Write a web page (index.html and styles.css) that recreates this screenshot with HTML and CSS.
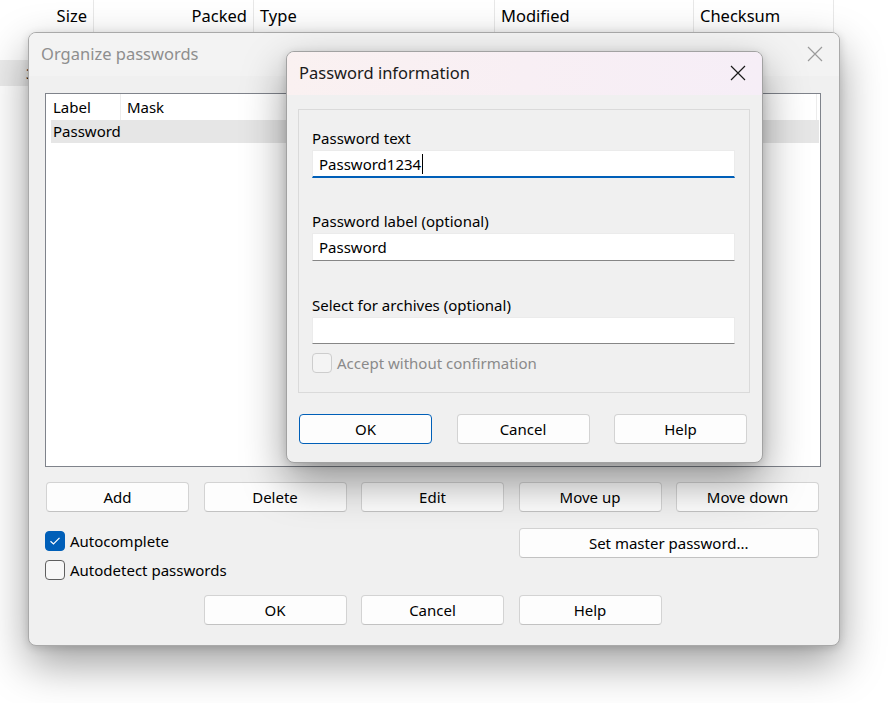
FILE: index.html
```html
<!DOCTYPE html>
<html>
<head>
<meta charset="utf-8">
<link rel="stylesheet" href="styles.css">
</head>
<body>
<div class="filelist">
  <div class="fl-header">
    <div class="fl-col c-size">Size</div>
    <div class="fl-col c-packed">Packed</div>
    <div class="fl-col c-type">Type</div>
    <div class="fl-col c-mod">Modified</div>
    <div class="fl-col c-sum">Checksum</div>
  </div>
  <div class="fl-row"></div>
  <div class="fl-row sel"><span class="fl-cell">3</span></div>
</div>

<div class="dialog outer">
  <div class="titlebar">
    <span class="title">Organize passwords</span>
    <svg class="close" width="16" height="16" viewBox="0 0 16 16"><path d="M1 1L15 15M15 1L1 15" stroke="currentColor" stroke-width="1.2" fill="none"/></svg>
  </div>
  <div class="obody">
    <div class="listbox">
      <div class="lb-header">
        <div class="lb-col lb-label">Label</div>
        <div class="lb-col lb-mask">Mask</div>
        <div class="lb-col lb-rest"></div>
      </div>
      <div class="lb-row sel">Password</div>
    </div>
    <div class="actions">
      <button class="btn">Add</button>
      <button class="btn">Delete</button>
      <button class="btn">Edit</button>
      <button class="btn">Move up</button>
      <button class="btn">Move down</button>

      <div class="checks">
        <label class="chk"><span class="box checked"><svg width="12" height="10" viewBox="0 0 12 10"><path d="M1.5 5.2L4.5 8L10.5 1.8" stroke="#fff" stroke-width="1.2" fill="none"/></svg></span>Autocomplete</label>
        <label class="chk"><span class="box"></span>Autodetect passwords</label>
      </div>
      <button class="btn master">Set master password...</button>

      <button class="btn b-ok">OK</button>
      <button class="btn b-cancel">Cancel</button>
      <button class="btn b-help">Help</button>
    </div>
  </div>
</div>

<div class="dialog inner">
  <div class="titlebar pink">
    <span class="title dark">Password information</span>
    <svg class="close dark" width="16" height="16" viewBox="0 0 16 16"><path d="M1 1L15 15M15 1L1 15" stroke="currentColor" stroke-width="1.2" fill="none"/></svg>
  </div>
  <div class="ibody">
    <div class="group">
      <div class="field">
        <div class="flabel">Password text</div>
        <div class="input focus">Password1234<span class="caret"></span></div>
      </div>
      <div class="field">
        <div class="flabel">Password label (optional)</div>
        <div class="input">Password</div>
      </div>
      <div class="field">
        <div class="flabel">Select for archives (optional)</div>
        <div class="input"></div>
      </div>
      <label class="chk disabled"><span class="box"></span>Accept without confirmation</label>
    </div>
    <div class="ibuttons">
      <button class="btn default">OK</button>
      <button class="btn">Cancel</button>
      <button class="btn">Help</button>
    </div>
  </div>
</div>
</body>
</html>
```

FILE: styles.css
```css
html, body {
  margin: 0;
  padding: 0;
  background: #ffffff;
  width: 892px;
  height: 703px;
  overflow: hidden;
  font-family: "Noto Sans", "Open Sans", sans-serif;
  font-size: 15px;
  color: #000;
}

/* background file list */
.filelist { width: 892px; }
.fl-header {
  display: flex;
  height: 32px;
  font-size: 16.5px;
}
.fl-col {
  box-sizing: border-box;
  border-right: 1px solid #e8e8e8;
  line-height: 32px;
  padding: 0 6px;
}
.c-size { width: 94px; text-align: right; }
.c-packed { width: 160px; text-align: right; }
.c-type { width: 241px; }
.c-mod { width: 199px; }
.c-sum { width: 140px; }
.fl-row { height: 28px; width: 834px; }
.fl-row.sel { height: 26px; background: #ececec; }
.fl-cell { display: inline-block; padding-left: 26px; line-height: 26px; }

/* dialogs */
.dialog {
  position: absolute;
  box-sizing: border-box;
  border: 1px solid #a9a9a9;
  border-radius: 8px;
  background: #f0f0f0;
  overflow: hidden;
}
.outer {
  left: 28px;
  top: 32px;
  width: 812px;
  height: 614px;
  box-shadow: 0 18px 44px rgba(0, 0, 0, 0.38), 0 2px 8px rgba(0,0,0,0.14);
}
.inner {
  left: 286px;
  top: 51px;
  width: 477px;
  height: 412px;
  border-color: #a2a2a2;
  box-shadow: 0 18px 44px rgba(0, 0, 0, 0.4), 0 2px 8px rgba(0,0,0,0.14);
}
.titlebar {
  display: flex;
  align-items: center;
  justify-content: space-between;
  height: 43px;
  padding: 0 16px 2px 12px;
  box-sizing: border-box;
  background: #f3f3f3;
}
.pink {
  height: 43px;
  padding-right: 16px;
  background: linear-gradient(90deg, #faf1f1 0%, #f8eff4 50%, #f6eef7 100%);
}
.title {
  font-size: 16.5px;
  color: #8e8e8e;
}
.title.dark { color: #1a1a1a; }
.close { color: #9b9b9b; display: block; }
.close.dark { color: #1a1a1a; }

/* outer body */
.obody {
  padding: 17px 0 0 16px;
}
.listbox {
  box-sizing: border-box;
  width: 776px;
  height: 374px;
  border: 1px solid #7f838b;
  background: #ffffff;
  padding: 0 1px 0 5px;
}
.lb-header {
  display: flex;
  height: 26px;
}
.lb-col {
  box-sizing: border-box;
  line-height: 26px;
  padding-left: 2px;
  border-right: 1px solid #ececec;
}
.lb-label { width: 70px; }
.lb-mask { width: 697px; padding-left: 6px; }
.lb-rest { flex: 1; border-right: none; }
.lb-row {
  height: 23px;
  line-height: 23px;
  padding-left: 2px;
}
.lb-row.sel { background: #e6e6e6; }

.actions {
  display: grid;
  grid-template-columns: repeat(5, 143px);
  column-gap: 14.5px;
  margin: 15px 0 0 1px;
}
.btn {
  box-sizing: border-box;
  height: 30px;
  margin: 0;
  padding: 0;
  font-family: inherit;
  font-size: 15px;
  color: #000;
  background: #fdfdfd;
  border: 1px solid #d3d3d3;
  border-bottom-color: #c2c2c2;
  border-radius: 4px;
}
.checks {
  grid-column: 1 / 4;
  margin-top: 16px;
  padding-top: 3px;
  margin-left: -1px;
  display: flex;
  flex-direction: column;
  gap: 9px;
}
.master {
  grid-column: 4 / 6;
  margin-top: 16px;
  align-self: start;
}
.b-ok { grid-column: 2; margin-top: 15px; }
.b-cancel { grid-column: 3; margin-top: 15px; }
.b-help { grid-column: 4; margin-top: 15px; }

.chk {
  display: flex;
  align-items: center;
  height: 20px;
  gap: 5px;
  white-space: nowrap;
}
.box {
  box-sizing: border-box;
  width: 20px;
  height: 20px;
  border: 1px solid #5f5f5f;
  border-radius: 4px;
  background: #f7f7f7;
  display: flex;
  align-items: center;
  justify-content: center;
}
.box.checked {
  background: #005fb8;
  border-color: #005fb8;
}
.chk.disabled { color: #8a8a8a; }
.chk.disabled .box {
  border-color: #cdcdcd;
  background: #f4f4f4;
}

/* inner body */
.ibody {
  padding: 14px 0 0 11px;
}
.group {
  box-sizing: border-box;
  width: 452px;
  height: 284px;
  border: 1px solid #dadada;
  padding: 18px 14px 0 13px;
}
.field { margin-bottom: 33px; }
.field:nth-child(2) { margin-bottom: 34px; }
.field:nth-child(3) { margin-bottom: 9px; }
.flabel {
  height: 20px;
  line-height: 20px;
  margin-bottom: 2px;
}
.input {
  box-sizing: border-box;
  height: 28px;
  background: #ffffff;
  border: 1px solid #ebebeb;
  border-bottom: 1px solid #868686;
  padding-left: 6px;
  line-height: 26px;
  display: flex;
  align-items: center;
}
.field:nth-child(3) .input { height: 27px; }
.input.focus {
  border-bottom: 2px solid #005fb8;
}
.caret {
  display: inline-block;
  width: 1px;
  height: 20px;
  background: #000;
  margin-left: 1px;
}
.ibuttons {
  display: grid;
  grid-template-columns: repeat(3, 133px);
  column-gap: 24.5px;
  margin: 21px 0 0 1px;
}
.btn.default {
  border: 1px solid #005fb8;
}
```
